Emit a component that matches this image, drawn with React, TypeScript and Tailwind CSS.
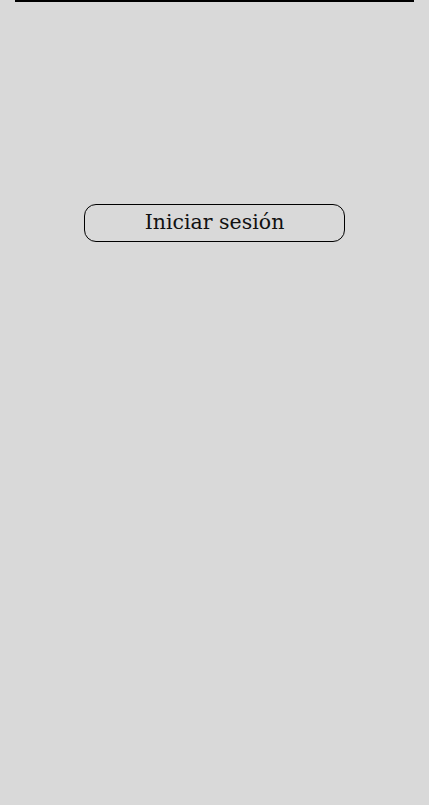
const App = () => {
  return (
    <div className="min-h-[805px] bg-[#d9d9d9] font-['DejaVu_Serif',serif]">
      <div className="mx-[15px] h-[2px] bg-black" />
      <div className="flex justify-center pt-[202px]">
        <button className="w-[261px] h-[38px] rounded-[12px] border border-black pb-[2px] text-[20.5px] leading-none text-[#111]">
          Iniciar sesión
        </button>
      </div>
    </div>
  );
};

export default App;
